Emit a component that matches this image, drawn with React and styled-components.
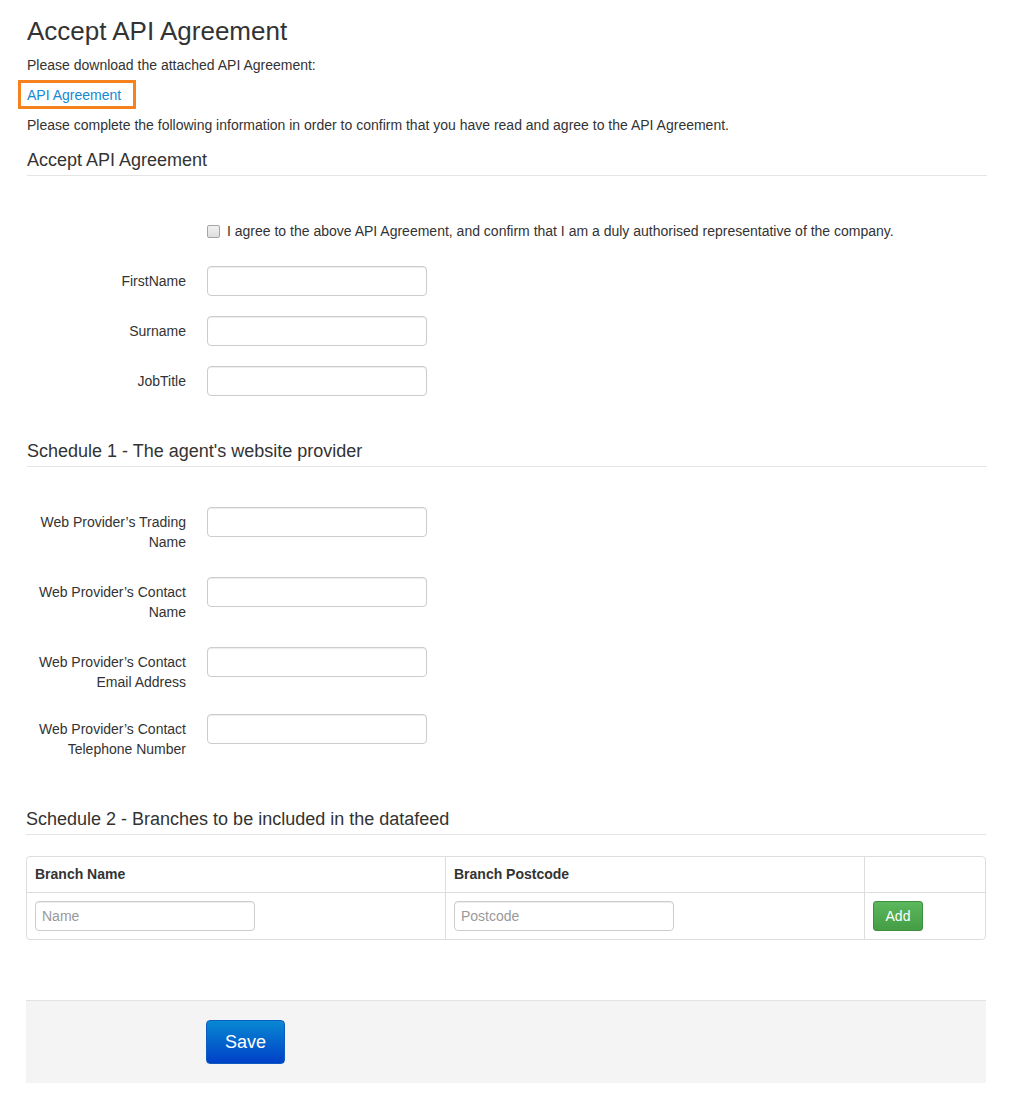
import React from "react";
import styled, { createGlobalStyle } from "styled-components";

const Global = createGlobalStyle`
  html, body { margin: 0; padding: 0; background: #fff; }
  body {
    font-family: "Liberation Sans", Arial, sans-serif;
    font-size: 14px;
    line-height: 20px;
    color: #333;
  }
  * { box-sizing: border-box; }
`;

const Page = styled.main`
  width: 960px;
  margin-left: 27px;
  padding-bottom: 14px;
`;

const Title = styled.h1`
  margin: 16px 0 0;
  font-size: 26px;
  font-weight: 400;
  line-height: 30px;
  color: #333;
`;

const Text = styled.p`
  margin: ${(p) => p.$mt || 0}px 0 0;
  line-height: 20px;
`;

const LinkBox = styled.div`
  margin: 5px 0 0 -9px;
`;

const DocLink = styled.a`
  display: inline-block;
  color: #1589d3;
  text-decoration: none;
  line-height: 20px;
  padding: 2px 12px 1px 6px;
  border: 3px solid #f5821f;
`;

const Section = styled.section`
  margin: ${(p) => p.$mt}px ${(p) => (p.$shift ? 1 : 0)}px 0 ${(p) => (p.$shift ? -1 : 0)}px;
`;

const SectionTitle = styled.h3`
  margin: 0;
  font-size: 18px;
  font-weight: 400;
  line-height: 20px;
  padding-bottom: 5px;
  border-bottom: 1px solid #e5e5e5;
  color: #333;
`;

const Form = styled.div`
  display: flex;
  flex-direction: column;
  margin-top: ${(p) => p.$mt}px;
`;

const Row = styled.div`
  display: grid;
  grid-template-columns: 160px 220px;
  column-gap: 20px;
  align-items: start;
  margin-top: ${(p) => p.$mt || 0}px;
`;

const Label = styled.label`
  text-align: right;
  line-height: 20px;
  padding-top: 5px;
  padding-right: 1px;
`;

const CheckRow = styled.label`
  grid-column: 2 / span 2;
  display: flex;
  align-items: center;
  white-space: nowrap;
  line-height: 20px;
  width: 720px;
`;

const Check = styled.input.attrs({ type: "checkbox" })`
  appearance: none;
  width: 13px;
  height: 13px;
  margin: 0 7px 0 0;
  border: 1px solid #a5a5a5;
  border-radius: 2px;
  background: linear-gradient(#f1f1f1, #dedede);
  flex: none;
`;

const Input = styled.input`
  display: block;
  width: 220px;
  height: 30px;
  padding: 0 6px;
  border: 1px solid #ccc;
  border-radius: 4px;
  box-shadow: inset 0 1px 1px rgba(0, 0, 0, 0.075);
  font-family: "Liberation Sans", Arial, sans-serif;
  font-size: 14px;
  color: #555;
  background: #fff;
  &::placeholder { color: #999; }
`;

const Table = styled.div`
  margin-top: 21px;
  border: 1px solid #ddd;
  border-radius: 4px;
  display: grid;
  grid-template-columns: 418px 419px 1fr;
`;

const Cell = styled.div`
  padding: 8px;
  line-height: 19px;
  font-weight: ${(p) => (p.$head ? 700 : 400)};
  border-left: ${(p) => (p.$first ? "none" : "1px solid #ddd")};
  border-top: ${(p) => (p.$head ? "none" : "1px solid #ddd")};
  min-height: ${(p) => (p.$head ? 35 : 47)}px;
`;

const AddButton = styled.button`
  width: 50px;
  height: 30px;
  border: 1px solid #3e8f3e;
  border-radius: 3px;
  background: linear-gradient(#5cb85c, #449d44);
  color: #fff;
  font-family: "Liberation Sans", Arial, sans-serif;
  font-size: 14px;
  padding: 0;
`;

const Footer = styled.div`
  margin-top: 60px;
  margin-left: -1px;
  margin-right: 1px;
  background: #f4f4f4;
  border-top: 1px solid #e3e3e3;
  padding: 19px 0 19px 180px;
`;

const SaveButton = styled.button`
  width: 79px;
  height: 44px;
  border: 1px solid #0a5cc0;
  border-radius: 4px;
  background: linear-gradient(#0888d2, #0040c8);
  color: #fff;
  font-family: "Liberation Sans", Arial, sans-serif;
  font-size: 18px;
  padding: 0;
`;

const basicFields = ["FirstName", "Surname", "JobTitle"];
const providerFields = [
  { l1: "Web Provider\u2019s Trading", l2: "Name", mt: 0 },
  { l1: "Web Provider\u2019s Contact", l2: "Name", mt: 25 },
  { l1: "Web Provider\u2019s Contact", l2: "Email Address", mt: 25 },
  { l1: "Web Provider\u2019s Contact", l2: "Telephone Number", mt: 22 },
];

export default function App() {
  return (
    <>
      <Global />
      <Page>
        <Title>Accept API Agreement</Title>
        <Text $mt={9}>Please download the attached API Agreement:</Text>
        <LinkBox>
          <DocLink href="#">API Agreement</DocLink>
        </LinkBox>
        <Text $mt={6}>
          Please complete the following information in order to confirm that you have read and agree to the API Agreement.
        </Text>

        <Section $mt={15}>
          <SectionTitle>Accept API Agreement</SectionTitle>
          <Form $mt={45}>
            <Row>
              <div />
              <CheckRow>
                <Check />
                I agree to the above API Agreement, and confirm that I am a duly authorised representative of the company.
              </CheckRow>
            </Row>
            {basicFields.map((f, i) => (
              <Row key={f} $mt={i === 0 ? 25 : 20}>
                <Label>{f}</Label>
                <Input />
              </Row>
            ))}
          </Form>
        </Section>

        <Section $mt={45}>
          <SectionTitle>Schedule 1 - The agent's website provider</SectionTitle>
          <Form $mt={40}>
            {providerFields.map((f, i) => (
              <Row key={i} $mt={f.mt}>
                <Label>
                  {f.l1}
                  <br />
                  {f.l2}
                </Label>
                <Input />
              </Row>
            ))}
          </Form>
        </Section>

        <Section $mt={50} $shift>
          <SectionTitle>Schedule 2 - Branches to be included in the datafeed</SectionTitle>
          <Table>
            <Cell $head $first>Branch Name</Cell>
            <Cell $head>Branch Postcode</Cell>
            <Cell $head />
            <Cell $first>
              <Input placeholder="Name" />
            </Cell>
            <Cell>
              <Input placeholder="Postcode" />
            </Cell>
            <Cell>
              <AddButton>Add</AddButton>
            </Cell>
          </Table>
        </Section>

        <Footer>
          <SaveButton>Save</SaveButton>
        </Footer>
      </Page>
    </>
  );
}
